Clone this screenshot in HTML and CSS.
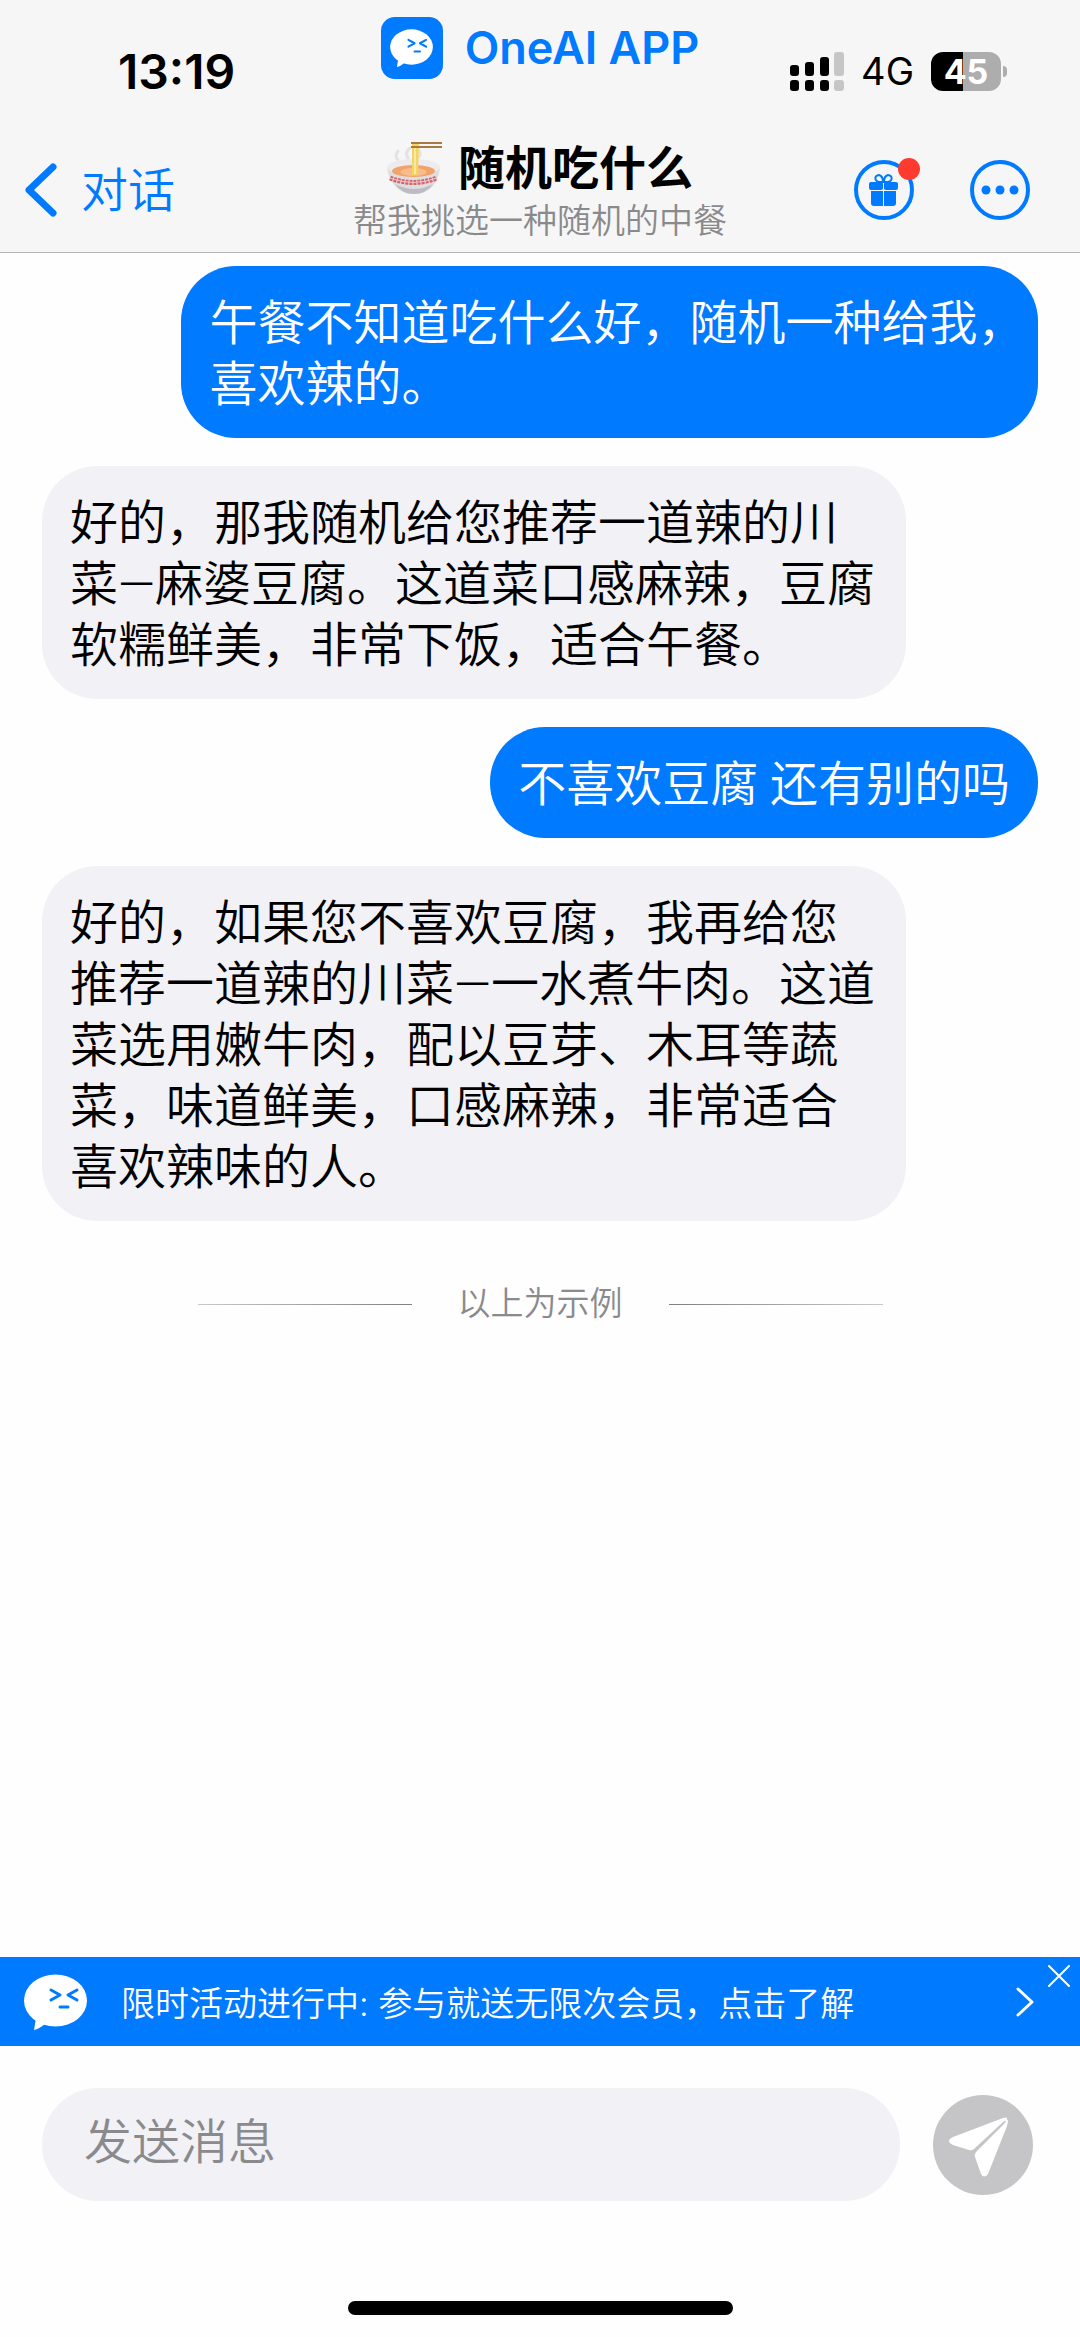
FILE: index.html
```html
<!DOCTYPE html>
<html lang="zh-CN">
  <head>
    <meta charset="UTF-8" />
    <meta name="viewport" content="width=device-width, initial-scale=1.0" />
    <title>随机吃什么</title>
    <link rel="stylesheet" href="styles.css">
  </head>
  <body>
    <header class="header">
      <div class="status">
        <span class="time">13:19</span>
        <div class="brand">
          <span class="brandIcon">
            <svg width="43" height="38" viewBox="0 0 63 56">
              <ellipse cx="31.5" cy="26.5" rx="31.5" ry="26" fill="#fff" />
              <path d="M12 44L10 56Q15 55 21 50Z" fill="#fff" />
              <g class="face">
                <path d="M27 16L36 21L27 26M53 16L44 21L53 26M36 33H44" />
              </g>
            </svg>
          </span>
          <span class="brandName">OneAI APP</span>
        </div>
        <div class="indicators">
          <svg width="54" height="39" viewBox="0 0 54 39">
            <g fill="#000">
              <rect x="0" y="13" width="9" height="11" rx="3" />
              <rect x="15" y="10" width="9" height="14" rx="3" />
              <rect x="30" y="5" width="9" height="19" rx="3" />
              <rect x="0" y="28" width="9" height="11" rx="3" />
              <rect x="15" y="28" width="9" height="11" rx="3" />
              <rect x="30" y="28" width="9" height="11" rx="3" />
            </g>
            <g fill="#c6c6c6">
              <rect x="44" y="0" width="10" height="24" rx="3" />
              <rect x="44" y="28" width="10" height="11" rx="3" />
            </g>
          </svg>
          <span class="network">4G</span>
          <span class="battery">45</span>
        </div>
      </div>

      <nav class="nav">
        <a class="back" href="#">
          <svg width="32" height="54" viewBox="0 0 32 54">
            <path d="M28 4L4 27L28 50" fill="none" stroke="#007aff" stroke-width="7" stroke-linecap="round" stroke-linejoin="round" />
          </svg>
          <span>对话</span>
        </a>
        <div class="titleWrap">
          <h1>
            <svg width="55" height="52" viewBox="0 0 55 52">
              <path d="M11 18Q7 14 11 9M21 16Q17 11 23 6M32 15Q35 11 31 7" fill="none" stroke="#e3e3e5" stroke-width="3" stroke-linecap="round" />
              <path d="M0 25Q1 38 11 47Q18 52 27 52Q36 52 43 47Q52 39 53 25Z" fill="#dedee1" />
              <path d="M8 42Q15 52 27 52Q39 52 46 42Q37 47 27 47Q17 47 8 42Z" fill="#bcbcc2" />
              <ellipse cx="26.5" cy="25" rx="26.5" ry="8" fill="#ececee" />
              <ellipse cx="26.5" cy="29" rx="21.5" ry="6" fill="#f2a36b" />
              <ellipse cx="26.5" cy="30" rx="13" ry="4" fill="#f8bd8a" />
              <path d="M3 36Q26 45 50 36" fill="none" stroke="#d4646b" stroke-width="5" stroke-dasharray="3 1" />
              <path d="M3 36Q26 45 50 36" fill="none" stroke="#efc9cc" stroke-width="1" />
              <path d="M25 2H32L31 33H25Z" fill="#f3d565" />
              <path d="M28 4V32" stroke="#fbe9a0" stroke-width="2" />
              <path d="M24 1H55M24 5H55" stroke="#a87945" stroke-width="2" />
            </svg>
            随机吃什么
          </h1>
          <p>帮我挑选一种随机的中餐</p>
        </div>
        <div class="actions">
          <button class="round" type="button" aria-label="礼物">
            <svg width="30" height="34" viewBox="0 0 30 34">
              <g fill="#007aff">
                <rect x="0" y="9" width="14" height="8" rx="2" />
                <rect x="15" y="9" width="14" height="8" rx="2" />
                <path d="M2 18H14V33H5Q2 33 2 30Z" />
                <path d="M15 18H27V30Q27 33 24 33H15Z" />
              </g>
              <path d="M14 9C4 10 5 2 10 2Q14 3 14 9ZM15 9C25 10 24 2 19 2Q15 3 15 9Z" fill="none" stroke="#007aff" stroke-width="2" />
            </svg>
            <span class="dot"></span>
          </button>
          <button class="round" type="button" aria-label="更多">
            <svg width="38" height="10" viewBox="0 0 38 10" fill="#007aff">
              <circle cx="5" cy="5" r="4.5" />
              <circle cx="19" cy="5" r="4.5" />
              <circle cx="33" cy="5" r="4.5" />
            </svg>
          </button>
        </div>
      </nav>
    </header>

    <main class="chat">
      <p class="bubble mine"><span class="line">午餐不知道吃什么好，随机一种给我，</span>喜欢辣的。</p>
      <p class="bubble">好的，那我随机给您推荐一道辣的川菜—麻婆豆腐。这道菜口感麻辣，豆腐软糯鲜美，非常下饭，适合午餐。</p>
      <p class="bubble mine">不喜欢豆腐 还有别的吗</p>
      <p class="bubble">好的，如果您不喜欢豆腐，我再给您推荐一道辣的川菜—一水煮牛肉。这道菜选用嫩牛肉，配以豆芽、木耳等蔬菜，味道鲜美，口感麻辣，非常适合喜欢辣味的人。</p>
      <div class="divider">以上为示例</div>
    </main>

    <div class="banner">
      <a class="bannerLink" href="#">
        <svg width="63" height="56" viewBox="0 0 63 56">
          <ellipse cx="31.5" cy="26.5" rx="31.5" ry="26" fill="#fff" />
          <path d="M12 44L10 56Q15 55 21 50Z" fill="#fff" />
          <g class="face">
            <path d="M27 16L36 21L27 26M53 16L44 21L53 26M36 33H44" />
          </g>
        </svg>
        <span class="bannerText">限时活动进行中: 参与就送无限次会员，点击了解</span>
        <svg width="18" height="30" viewBox="0 0 18 30">
          <path d="M2 2L16 15L2 28" fill="none" stroke="#fff" stroke-width="3" stroke-linecap="round" stroke-linejoin="round" />
        </svg>
      </a>
      <button class="close" type="button" aria-label="关闭">
        <svg width="22" height="22" viewBox="0 0 22 22">
          <path d="M1 1L21 21M21 1L1 21" stroke="#fff" stroke-width="2" stroke-linecap="round" />
        </svg>
      </button>
    </div>

    <footer class="footer">
      <form class="sendForm">
        <input class="message" type="text" placeholder="发送消息" aria-label="发送消息" />
        <button class="send" type="button" aria-label="发送">
          <svg width="100" height="100" viewBox="0 0 100 100" fill="#fff">
            <path d="M70 23L20 42Q12 46 20 50L36 55Q39 56 41 54L69 28Q72 25 73 26Q75 24 74 23Q73 22 70 23Z" />
            <path d="M75 25Q75 27 74 31L55 79Q51 84 48 79L42 62Q41 60 43 57L71 29Q73 27 73 25Z" />
          </svg>
        </button>
      </form>
      <div class="homeBar"></div>
    </footer>
  </body>
</html>
```

FILE: styles.css
```css
* {
  margin: 0;
  padding: 0;
  box-sizing: border-box;
}
body {
  display: flex;
  flex-direction: column;
  min-height: 100vh;
  font-family: Inter, 'Noto Sans CJK SC', sans-serif;
  font-size: 48px;
  color: #000;
  background-color: #fefefe;
}
svg {
  display: block;
  flex: none;
}
a {
  text-decoration: none;
}
button {
  border: none;
  background: none;
  font: inherit;
  cursor: pointer;
}
.face path {
  fill: none;
  stroke: #007aff;
  stroke-width: 3;
  stroke-linecap: round;
  stroke-linejoin: round;
}

/* header */
.header {
  background-color: #f6f6f6;
  border-bottom: 1px solid #b4b4b6;
}
.status,
.nav {
  display: grid;
  grid-template-columns: 1fr auto 1fr;
  align-items: center;
  height: 126px;
}
.status {
  padding-top: 16px;
}
.nav {
  padding-top: 2px;
}
.time {
  padding-left: 118px;
  font-weight: 600;
}
.brand {
  display: flex;
  align-items: center;
  align-self: start;
  gap: 22px;
}
.brandIcon {
  display: flex;
  align-items: center;
  justify-content: center;
  width: 62px;
  height: 62px;
  border-radius: 14px;
  background-color: #007aff;
}
.brandName {
  font-size: 45px;
  line-height: 64px;
  font-weight: 600;
  color: #007aff;
}
.indicators {
  display: flex;
  align-items: center;
  justify-content: flex-end;
  gap: 17px;
  padding-right: 79px;
}
.network {
  font-size: 38px;
  line-height: 38px;
}
.battery {
  position: relative;
  width: 70px;
  border-radius: 12px;
  font-size: 34px;
  line-height: 39px;
  font-weight: 700;
  text-align: center;
  color: #fff;
  background: linear-gradient(to right, #000 32px, #adadad 32px);
}
.battery::after {
  content: '';
  position: absolute;
  top: 14px;
  left: 72px;
  width: 4px;
  height: 11px;
  border-radius: 0 5px 5px 0;
  background-color: #adadad;
}
.back {
  display: flex;
  align-items: center;
  gap: 24px;
  padding-left: 25px;
  font-size: 47px;
  font-weight: 350;
  line-height: 56px;
  color: #007aff;
}
.titleWrap {
  padding-top: 6px;
  text-align: center;
}
.titleWrap h1 {
  display: flex;
  align-items: center;
  justify-content: center;
  gap: 16px;
  font-size: 47px;
  line-height: 56px;
}
.titleWrap p {
  font-size: 34px;
  font-weight: 350;
  line-height: 50px;
  color: #8a8a8d;
}
.actions {
  display: flex;
  justify-content: flex-end;
  gap: 56px;
  padding-right: 50px;
}
.round {
  position: relative;
  display: flex;
  align-items: center;
  justify-content: center;
  width: 60px;
  height: 60px;
  border: 4px solid #007aff;
  border-radius: 50%;
}
.dot {
  position: absolute;
  top: -6px;
  right: -10px;
  width: 22px;
  height: 22px;
  border-radius: 50%;
  background-color: #ff3b30;
}

/* chat */
.chat {
  flex: 1;
  display: flex;
  flex-direction: column;
  align-items: flex-start;
  gap: 28px;
  padding: 13px 42px;
  font-family: Roboto, 'Noto Sans CJK SC', sans-serif;
  font-weight: 350;
}
.bubble {
  max-width: 80vw;
  padding: 27px 28px 23px;
  border-radius: 55px;
  line-height: 61px;
  background-color: #f1f1f6;
}
.mine {
  align-self: flex-end;
  max-width: 86%;
  color: #fff;
  background-color: #007aff;
}
/* the closing comma may hang into the padding */
.line {
  white-space: nowrap;
}
.divider {
  display: flex;
  align-items: center;
  align-self: center;
  gap: 46px;
  margin-top: 32px;
  font-size: 33px;
  line-height: 46px;
  color: #8a8a8d;
}
.divider::before,
.divider::after {
  content: '';
  width: 214px;
  height: 1px;
  background: linear-gradient(to right, #c8c8c8, #808080);
}
.divider::after {
  background: linear-gradient(to left, #c8c8c8, #808080);
}

/* banner */
.banner {
  position: relative;
  background-color: #007aff;
}
.bannerLink {
  display: flex;
  align-items: center;
  height: 89px;
  padding: 0 46px 0 24px;
  color: #fff;
}
.bannerText {
  flex: 1;
  padding-left: 34px;
  font-size: 34px;
  font-weight: 350;
}
.close {
  position: absolute;
  top: 0;
  right: 0;
  padding: 8px 10px;
}

/* footer */
.sendForm {
  display: flex;
  align-items: center;
  gap: 33px;
  padding: 42px 47px 100px 42px;
}
.message {
  flex: 1;
  min-width: 0;
  height: 113px;
  padding: 0 42px 6px;
  border: none;
  border-radius: 57px;
  font: inherit;
  font-weight: 350;
  background-color: #f1f1f6;
}
.message::placeholder {
  color: #8a8a8d;
}
.send {
  flex: none;
  border-radius: 50%;
  background-color: #c5c5c7;
}
.homeBar {
  width: 385px;
  height: 14px;
  margin: 0 auto 22px;
  border-radius: 7px;
  background-color: #000;
}
```
